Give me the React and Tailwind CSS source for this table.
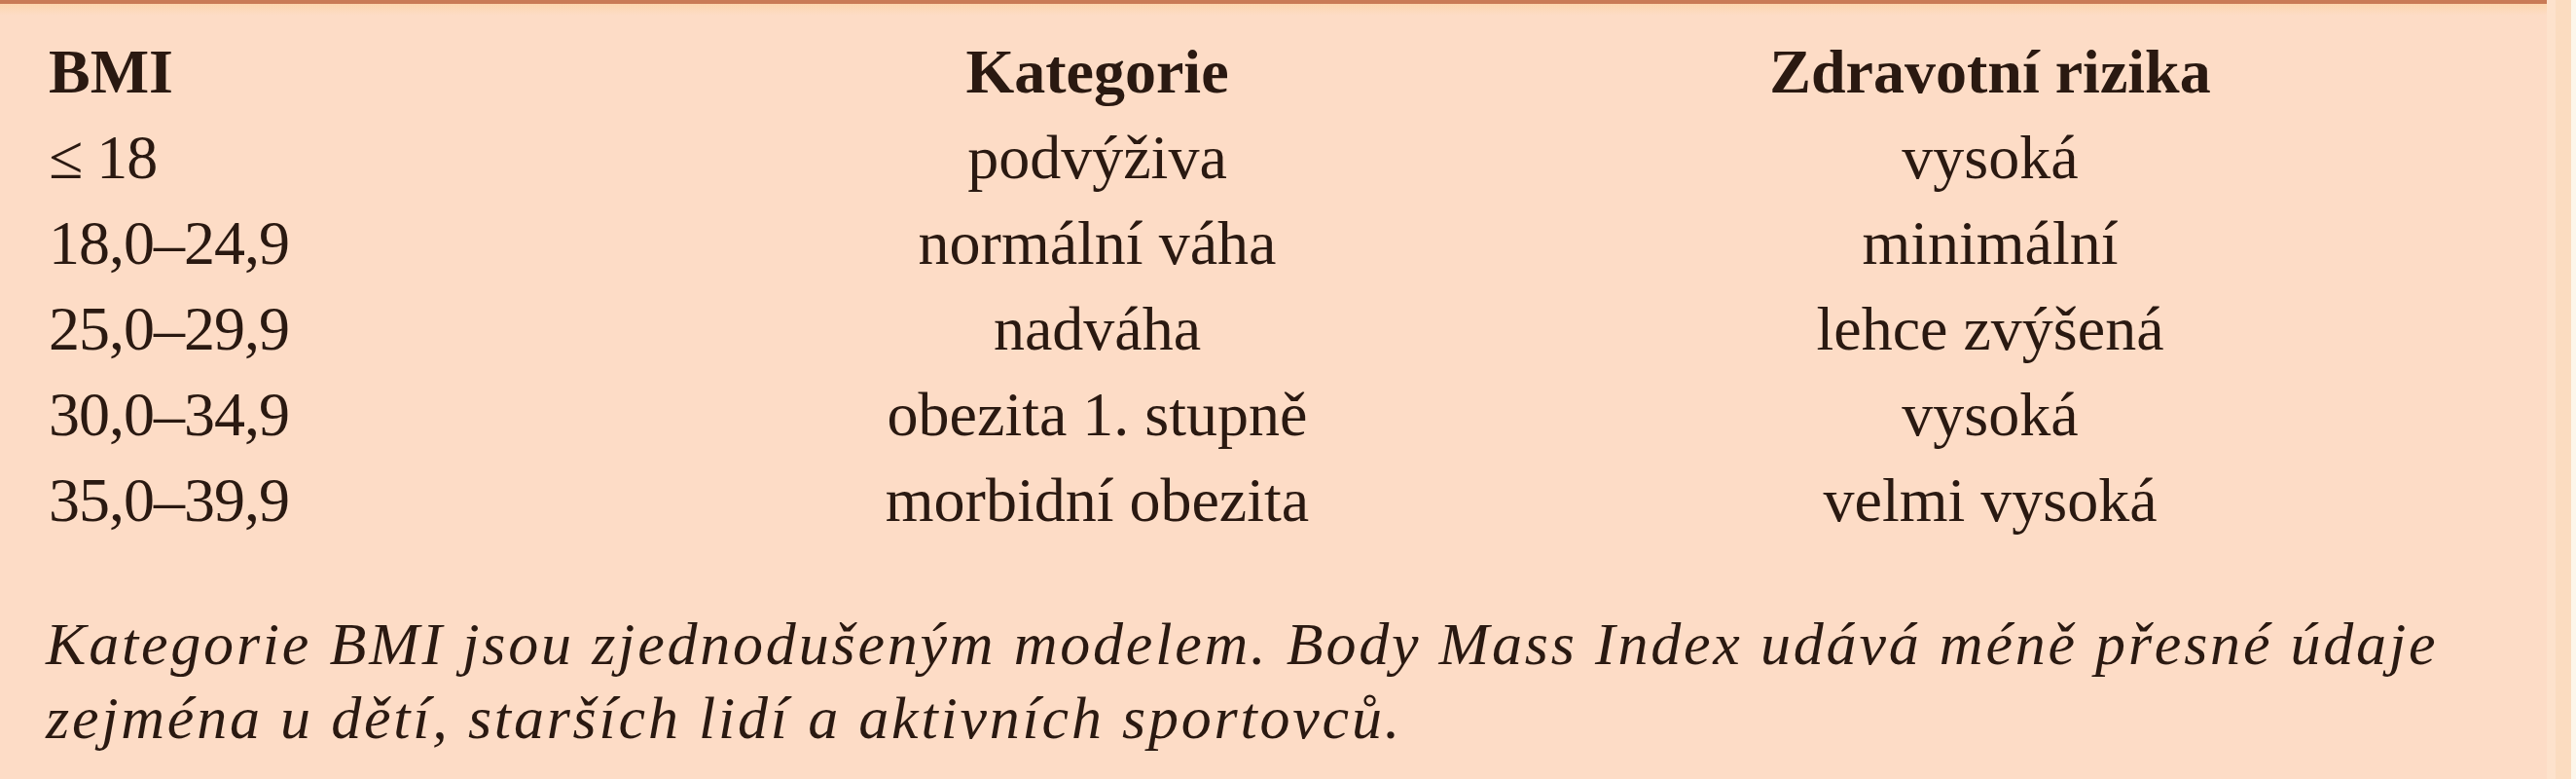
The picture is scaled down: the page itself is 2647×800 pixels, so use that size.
import React from "react";

const rows = [
  ["≤ 18", "podvýživa", "vysoká"],
  ["18,0–24,9", "normální váha", "minimální"],
  ["25,0–29,9", "nadváha", "lehce zvýšená"],
  ["30,0–34,9", "obezita 1. stupně", "vysoká"],
  ["35,0–39,9", "morbidní obezita", "velmi vysoká"],
];

export default function App() {
  return (
    <div className="w-[2647px] h-[800px] flex bg-[#fddcc6] text-[#2a1911] font-['Liberation_Serif',serif] overflow-hidden">
      <div className="flex-1 flex flex-col">
        <div className="h-[4px] bg-[#c97b56]" />
        <div className="h-[12px] bg-gradient-to-b from-[#fcd6ae] to-[#fddcc6]" />
        <div className="pt-[14px] pl-[50px]">
          <div className="grid grid-cols-[650px_855px_980px] text-[64px] leading-[88px]">
            <div className="font-bold">BMI</div>
            <div className="font-bold text-center">Kategorie</div>
            <div className="font-bold text-center">Zdravotní rizika</div>
            {rows.map((r, i) => (
              <React.Fragment key={i}>
                <div className="tracking-[-1px]">{r[0]}</div>
                <div className="text-center">{r[1]}</div>
                <div className="text-center">{r[2]}</div>
              </React.Fragment>
            ))}
          </div>
        </div>
        <div className="mt-[65px] pl-[47px] italic text-[62px] leading-[76px] tracking-[2.8px]">
          <p>Kategorie BMI jsou zjednodušeným modelem. Body Mass Index udává méně přesné údaje</p>
          <p>zejména u dětí, starších lidí a aktivních sportovců.</p>
        </div>
      </div>
      <div className="w-[30px] flex">
        <div className="w-[9px] bg-[#fde2cc]" />
        <div className="flex-1 bg-[#fbdcc0]" />
        <div className="w-[5px] bg-[#fdf6ea]" />
      </div>
    </div>
  );
}
